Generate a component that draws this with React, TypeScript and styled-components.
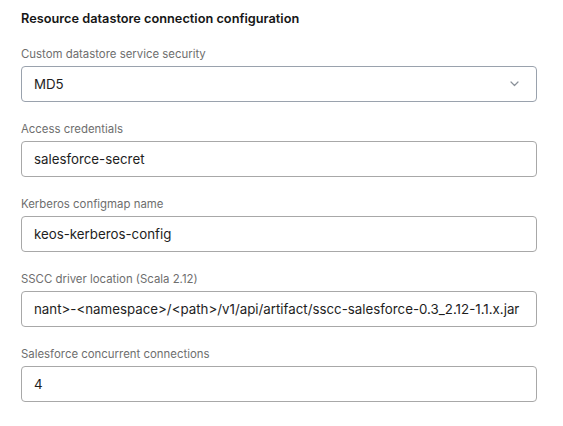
import { createGlobalStyle } from "styled-components";
import styled from "styled-components";

const GlobalStyle = createGlobalStyle`
  html, body {
    margin: 0;
    padding: 0;
    background: #ffffff;
  }
  body {
    font-family: Inter, "Liberation Sans", sans-serif;
    -webkit-font-smoothing: antialiased;
  }
`;

const fields = [
  { label: "Custom datastore service security", value: "MD5", select: true },
  { label: "Access credentials", value: "salesforce-secret" },
  { label: "Kerberos configmap name", value: "keos-kerberos-config" },
  {
    label: "SSCC driver location (Scala 2.12)",
    value: "nant>-<namespace>/<path>/v1/api/artifact/sscc-salesforce-0.3_2.12-1.1.x.jar",
  },
  { label: "Salesforce concurrent connections", value: "4" },
];

/* MAIN RETURN */
const App = () => {
  return (
    <>
      <GlobalStyle />
      <Panel>
        <Title>Resource datastore connection configuration</Title>
        <Form>
          {fields.map((f) => (
            <Field key={f.label}>
              <Label>{f.label}</Label>
              <Box select={!!f.select}>
                <Value>{f.value}</Value>
                {f.select && (
                  <svg width="9" height="6" viewBox="0 0 9 6">
                    <path
                      d="M1 1l3.5 3.5L8 1"
                      fill="none"
                      stroke="#8a9099"
                      strokeWidth="1.2"
                      strokeLinecap="round"
                      strokeLinejoin="round"
                    />
                  </svg>
                )}
              </Box>
            </Field>
          ))}
        </Form>
      </Panel>
    </>
  );
};

export default App;

const Panel = styled.div`
  width: 516px;
  padding: 11px 26px 20px 21px;
`;

const Title = styled.h3`
  margin: 0;
  font-size: 12.75px;
  line-height: 16px;
  font-weight: 600;
  color: #161616;
`;

const Form = styled.div`
  display: flex;
  flex-direction: column;
  gap: 20px;
  margin-top: 20px;
`;

const Field = styled.div`
  display: flex;
  flex-direction: column;
  gap: 4px;
`;

const Label = styled.label`
  font-size: 11.4px;
  line-height: 15px;
  color: #6e6e6e;
`;

const Box = styled.div<{ select: boolean }>`
  box-sizing: border-box;
  height: 36px;
  display: flex;
  align-items: center;
  justify-content: space-between;
  padding: 0 17px 0 12px;
  border: 1px solid ${(p) => (p.select ? "#9aa2ad" : "#a8a8a8")};
  border-radius: 4px;
  background: #fff;
  overflow: hidden;
`;

const Value = styled.span`
  font-size: 13.3px;
  color: #1e1e1e;
  white-space: nowrap;
`;
